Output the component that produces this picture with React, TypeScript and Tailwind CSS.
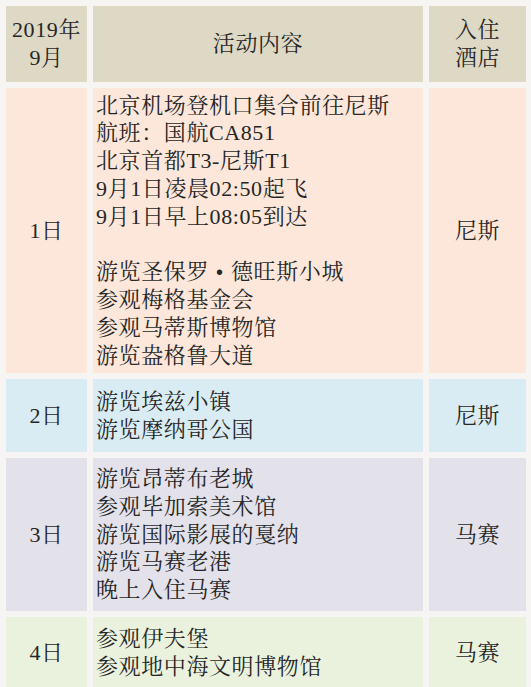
import React from "react";

const font = {
  fontFamily:
    '"Liberation Serif", "Noto Serif CJK SC", "Noto Sans CJK SC", serif',
};

type Row = {
  day: string;
  lines: React.ReactNode[];
  hotel: string;
  bg: string;
  h: string;
};

const Dot = () => (
  <span className="inline-block w-[22px] text-center font-bold scale-150">·</span>
);

const rows: Row[] = [
  {
    day: "1日",
    lines: [
      "北京机场登机口集合前往尼斯",
      "航班：国航CA851",
      "北京首都T3-尼斯T1",
      "9月1日凌晨02:50起飞",
      "9月1日早上08:05到达",
      "",
      <>
        游览圣保罗
        <Dot />
        德旺斯小城
      </>,
      "参观梅格基金会",
      "参观马蒂斯博物馆",
      "游览盎格鲁大道",
    ],
    hotel: "尼斯",
    bg: "bg-[#fce7da]",
    h: "h-[285px]",
  },
  {
    day: "2日",
    lines: ["游览埃兹小镇", "游览摩纳哥公国"],
    hotel: "尼斯",
    bg: "bg-[#d9ecf3]",
    h: "h-[73px]",
  },
  {
    day: "3日",
    lines: [
      "游览昂蒂布老城",
      "参观毕加索美术馆",
      "游览国际影展的戛纳",
      "游览马赛老港",
      "晚上入住马赛",
    ],
    hotel: "马赛",
    bg: "bg-[#e3e1ea]",
    h: "h-[153px]",
  },
  {
    day: "4日",
    lines: ["参观伊夫堡", "参观地中海文明博物馆"],
    hotel: "马赛",
    bg: "bg-[#eaf2de]",
    h: "h-[72px]",
  },
];

export default function App() {
  return (
    <div
      className="w-[531px] h-[687px] overflow-hidden bg-[#f6f5f3] pt-[6px] pl-[6px] text-[22px] leading-[27.8px] tracking-[0.6px] text-[#262626]"
      style={font}
    >
      <div className="grid grid-cols-[81px_330px_97px] gap-[6px]">
        <div className="h-[76px] bg-[#ddd9c5] flex flex-col items-center justify-center text-center">
          <div>2019年</div>
          <div>9月</div>
        </div>
        <div className="h-[76px] bg-[#ddd9c5] flex items-center justify-center">
          活动内容
        </div>
        <div className="h-[76px] bg-[#ddd9c5] flex flex-col items-center justify-center text-center">
          <div>入住</div>
          <div>酒店</div>
        </div>
        {rows.map((r, i) => (
          <React.Fragment key={i}>
            <div
              className={`${r.h} ${r.bg} flex items-center justify-center`}
            >
              {r.day}
            </div>
            <div
              className={`${r.h} ${r.bg} flex flex-col justify-center pl-[3px] whitespace-nowrap`}
            >
              {r.lines.map((l, j) => (
                <div key={j} className="h-[27.8px]">
                  {l}
                </div>
              ))}
            </div>
            <div
              className={`${r.h} ${r.bg} flex items-center justify-center`}
            >
              {r.hotel}
            </div>
          </React.Fragment>
        ))}
      </div>
    </div>
  );
}
